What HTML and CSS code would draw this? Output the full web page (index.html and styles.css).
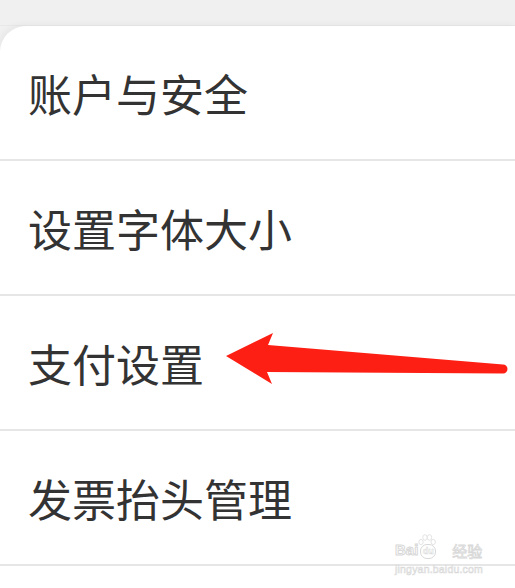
FILE: index.html
```html
<!DOCTYPE html>
<html lang="zh">
<head>
<meta charset="utf-8">
<link rel="stylesheet" href="styles.css">
</head>
<body>
<div class="page">
  <div class="topbar"></div>
  <div class="card">
    <div class="row">账户与安全</div>
    <div class="row">设置字体大小</div>
    <div class="row">支付设置</div>
    <div class="row">发票抬头管理</div>
  </div>
  <svg class="arrow" width="515" height="588" viewBox="0 0 515 588">
    <path d="M226 356 L273 333 L268 345 L503 364.5 A4.5 4.5 0 0 1 503 373.5 L267 372 L272 384 Z" fill="#fe1f14"/>
  </svg>
  <div class="watermark">
    <div class="wm-top">
      <span class="wm-bai">Bai</span>
      <span class="wm-paw">
        <svg class="wm-toes" width="18" height="12" viewBox="0 0 18 12">
          <ellipse cx="3" cy="8" rx="2.2" ry="2.6" fill="#fff" stroke="#dcdcdc" stroke-width="0.8"/>
          <ellipse cx="7" cy="3.5" rx="2.2" ry="2.8" fill="#fff" stroke="#dcdcdc" stroke-width="0.8"/>
          <ellipse cx="11.5" cy="3.5" rx="2.2" ry="2.8" fill="#fff" stroke="#dcdcdc" stroke-width="0.8"/>
          <ellipse cx="15.2" cy="8" rx="2.2" ry="2.6" fill="#fff" stroke="#dcdcdc" stroke-width="0.8"/>
        </svg>
        <span class="wm-du">du</span>
      </span>
      <span class="wm-jy">经验</span>
    </div>
    <div class="wm-url">jingyan.baidu.com</div>
  </div>
</div>
</body>
</html>
```

FILE: styles.css
```css
html, body {
  margin: 0;
  padding: 0;
  background: #ffffff;
}
.page {
  position: relative;
  width: 515px;
  height: 588px;
  overflow: hidden;
  background: #f0f0f0;
  font-family: "Noto Sans CJK SC", "Noto Sans", sans-serif;
}
.topbar {
  height: 25px;
  background: #f0f0f0;
  border-bottom: 1px solid #e8e8e8;
}
.card {
  background: #ffffff;
  border-top-left-radius: 26px;
  box-shadow: -2px -2px 6px rgba(0,0,0,0.04);
  height: 562px;
}
.row {
  height: 133px;
  border-bottom: 2px solid #e6e6e6;
  display: flex;
  align-items: center;
  padding-left: 28px;
  font-size: 44px;
  color: #333333;
}
.arrow {
  position: absolute;
  left: 0;
  top: 0;
  pointer-events: none;
}
.watermark {
  position: absolute;
  left: 395px;
  top: 535px;
  font-family: "Liberation Sans", Arial, sans-serif;
  color: #ffffff;
}
.wm-top {
  display: flex;
  align-items: flex-end;
  height: 24px;
}
.wm-bai {
  font-size: 15px;
  font-weight: bold;
  line-height: 15px;
  -webkit-text-stroke: 1px #d8d8d8;
  margin-bottom: 2px;
}
.wm-paw {
  position: relative;
  display: flex;
  align-items: center;
  justify-content: center;
  width: 14px;
  height: 13px;
  margin: 0 4px 0 2px;
  border: 1px solid #d8d8d8;
  border-radius: 7px;
  background: #fff;
}
.wm-toes {
  position: absolute;
  left: -3px;
  top: -11px;
}
.wm-du {
  font-size: 9px;
  font-weight: bold;
  line-height: 9px;
  -webkit-text-stroke: 0.5px #d8d8d8;
}
.wm-jy {
  font-family: "Noto Sans CJK SC", sans-serif;
  font-size: 15px;
  line-height: 17px;
  margin-left: 12px;
  -webkit-text-stroke: 0.8px #d8d8d8;
}
.wm-url {
  font-size: 10.5px;
  line-height: 12px;
  margin-top: 4px;
  letter-spacing: 0.2px;
  -webkit-text-stroke: 0.6px #d8d8d8;
}
```
